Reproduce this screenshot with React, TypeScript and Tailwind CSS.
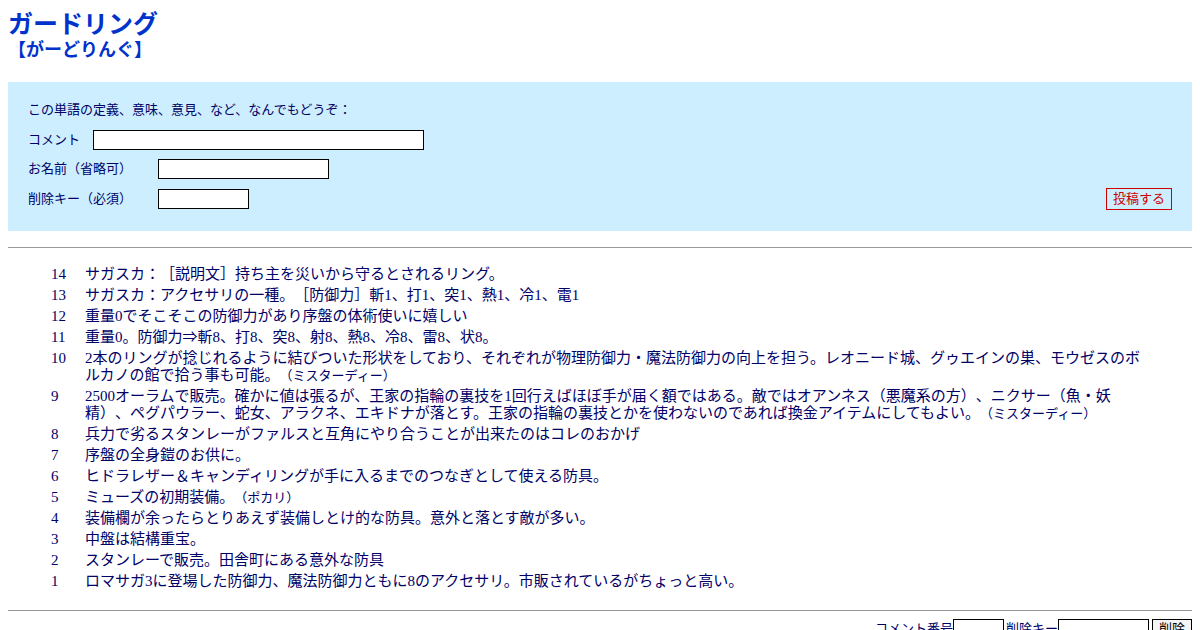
import React from 'react';

type Comment = { no: number; text: string; name?: string };

const comments: Comment[] = [
  { no: 14, text: 'サガスカ：［説明文］持ち主を災いから守るとされるリング。' },
  { no: 13, text: 'サガスカ：アクセサリの一種。［防御力］斬1、打1、突1、熱1、冷1、電1' },
  { no: 12, text: '重量0でそこそこの防御力があり序盤の体術使いに嬉しい' },
  { no: 11, text: '重量0。防御力⇒斬8、打8、突8、射8、熱8、冷8、雷8、状8。' },
  {
    no: 10,
    text: '2本のリングが捻じれるように結びついた形状をしており、それぞれが物理防御力・魔法防御力の向上を担う。レオニード城、グゥエインの巣、モウゼスのボルカノの館で拾う事も可能。',
    name: 'ミスターディー',
  },
  {
    no: 9,
    text: '2500オーラムで販売。確かに値は張るが、王家の指輪の裏技を1回行えばほぼ手が届く額ではある。敵ではオアンネス（悪魔系の方）、ニクサー（魚・妖精）、ペグパウラー、蛇女、アラクネ、エキドナが落とす。王家の指輪の裏技とかを使わないのであれば換金アイテムにしてもよい。',
    name: 'ミスターディー',
  },
  { no: 8, text: '兵力で劣るスタンレーがファルスと互角にやり合うことが出来たのはコレのおかげ' },
  { no: 7, text: '序盤の全身鎧のお供に。' },
  { no: 6, text: 'ヒドラレザー＆キャンディリングが手に入るまでのつなぎとして使える防具。' },
  { no: 5, text: 'ミューズの初期装備。', name: 'ポカリ' },
  { no: 4, text: '装備欄が余ったらとりあえず装備しとけ的な防具。意外と落とす敵が多い。' },
  { no: 3, text: '中盤は結構重宝。' },
  { no: 2, text: 'スタンレーで販売。田舎町にある意外な防具' },
  { no: 1, text: 'ロマサガ3に登場した防御力、魔法防御力ともに8のアクセサリ。市販されているがちょっと高い。' },
];

const gothic = "font-['Liberation_Sans','Noto_Sans_CJK_JP',sans-serif]";

export default function App() {
  return (
    <div className={`min-h-[630px] bg-white px-2 pt-[10px] text-[#000066] [text-spacing-trim:space-all] ${gothic}`}>
      <h1 className="text-[25px] font-bold leading-[28px] text-[#0033cc]">ガードリング</h1>
      <h2 className="text-[18px] font-bold leading-[24px] text-[#0033cc]">【がーどりんぐ】</h2>

      <div className="mt-5 bg-[#cceeff] px-5 pt-5 pb-[22px] text-[13px]">
        <p className="leading-4">この単語の定義、意味、意見、など、なんでもどうぞ：</p>
        <div className="mt-3 flex h-5 items-center">
          <span className="w-[65px]">コメント</span>
          <input className="h-5 w-[331px] border border-black bg-white" />
        </div>
        <div className="mt-[9px] flex h-5 items-center">
          <span className="w-[130px]">お名前（省略可）</span>
          <input className="h-5 w-[171px] border border-black bg-white" />
        </div>
        <div className="mt-[10px] flex h-5 items-center">
          <span className="w-[130px]">削除キー（必須）</span>
          <input className="h-5 w-[91px] border border-black bg-white" />
          <button className="ml-auto h-[22px] border border-[#cc0000] px-[6px] text-[13px] leading-5 text-[#cc0000]">
            投稿する
          </button>
        </div>
      </div>

      <hr className="mt-4 border-t border-[#999999]" />

      <div className="mt-4 pl-[43px] pr-[44px] font-['Liberation_Serif','Noto_Sans_CJK_JP',serif] text-[15px] leading-[17px]">
        {comments.map(c => (
          <div key={c.no} className="flex py-[2px]">
            <span className="w-[34px] shrink-0">{c.no}</span>
            <p className="flex-1">
              {c.text}
              {c.name && <span className="text-[13px]">（{c.name}）</span>}
            </p>
          </div>
        ))}
      </div>

      <hr className="mt-[18px] border-t border-[#999999]" />

      <div className="mt-2 flex items-center justify-end text-[13px]">
        <span>コメント番号</span>
        <input className="h-5 w-[51px] border border-black bg-white" />
        <span className="ml-[2px]">削除キー</span>
        <input className="h-5 w-[91px] border border-black bg-white" />
        <button className="ml-[3px] h-5 border border-black bg-[#f4f4f4] px-[6px] leading-4 text-black">削除</button>
      </div>
    </div>
  );
}
